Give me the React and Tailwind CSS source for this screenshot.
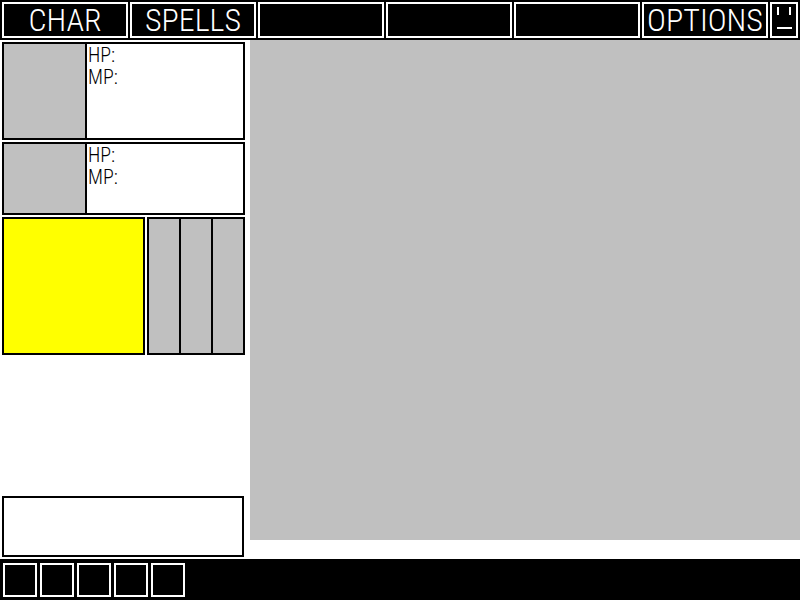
import React from "react";

const menuItems = ["CHAR", "SPELLS", "", "", "", "OPTIONS"];
const quickSlots = [1, 2, 3, 4, 5];

function MenuButton({ label, index }) {
  return (
    <button
      type="button"
      aria-label={label || `Menu ${index + 1}`}
      className="flex min-w-0 flex-1 items-center justify-center border-2 border-white bg-black text-[32px] leading-8 text-white"
    >
      {label}
    </button>
  );
}

function FaceIcon() {
  return (
    <svg width="16" height="22" viewBox="0 0 16 22" fill="white" shapeRendering="crispEdges" aria-hidden="true">
      <rect x="1" y="0" width="2" height="8" />
      <rect x="13" y="0" width="2" height="8" />
      <rect x="1" y="20" width="15" height="2" />
    </svg>
  );
}

function StatusPanel({ size }) {
  return (
    <section className={`flex border-2 border-black ${size}`}>
      <div className="w-[83px] border-r-2 border-black bg-[#c0c0c0]" />
      <div className="flex-1 px-px text-xl leading-[22px] text-black">
        <p>HP:</p>
        <p>MP:</p>
      </div>
    </section>
  );
}

export default function App() {
  return (
    <div className="flex min-h-screen flex-col bg-white font-['Roboto_Condensed','Roboto',sans-serif] font-light">
      <header className="flex h-10 gap-0.5 bg-black p-0.5">
        {menuItems.map((label, i) => (
          <MenuButton key={i} label={label} index={i} />
        ))}
        <button
          type="button"
          aria-label="Face"
          className="flex w-7 items-start justify-center border-2 border-white bg-black pt-[3px]"
        >
          <FaceIcon />
        </button>
      </header>

      <div className="flex flex-1">
        <aside className="flex w-[250px] shrink-0 flex-col gap-0.5 py-0.5 pr-[5px] pl-0.5">
          <StatusPanel size="h-[98px]" />
          <StatusPanel size="h-[73px]" />
          <div className="flex h-[138px] gap-0.5">
            <div className="flex-1 border-2 border-black bg-[#ffff00]" />
            <div className="grid w-[98px] grid-cols-3 gap-0.5 border-2 border-black bg-black">
              <div className="bg-[#c0c0c0]" />
              <div className="bg-[#c0c0c0]" />
              <div className="bg-[#c0c0c0]" />
            </div>
          </div>
          <textarea
            aria-label="Messages"
            className="mt-auto mr-px block h-[61px] resize-none border-2 border-black bg-white p-1 text-base text-black outline-none"
          />
        </aside>
        <main className="flex flex-1 flex-col pb-[19px]">
          <div className="flex-1 bg-[#c0c0c0]" />
        </main>
      </div>

      <footer className="flex h-[41px] gap-[3px] bg-black px-[3px] pt-1">
        {quickSlots.map((n) => (
          <button
            key={n}
            type="button"
            aria-label={`Slot ${n}`}
            className="size-[34px] border-2 border-white bg-black"
          />
        ))}
      </footer>
    </div>
  );
}
